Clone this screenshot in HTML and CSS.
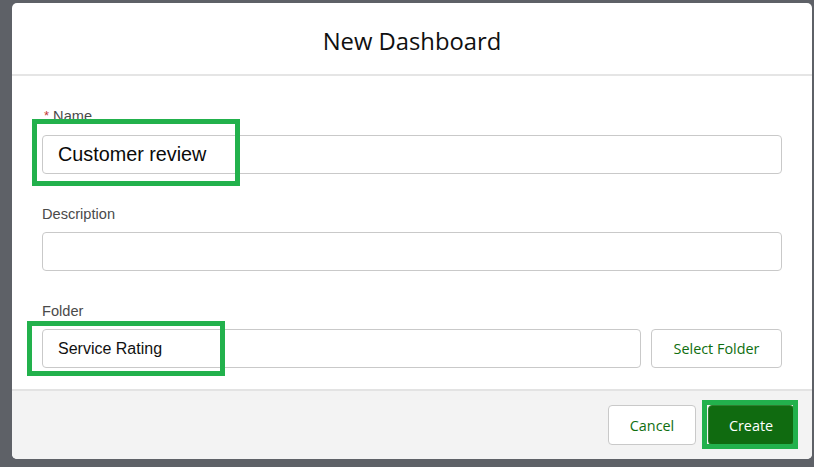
FILE: index.html
```html
<!DOCTYPE html>
<html lang="en">
<head>
<meta charset="utf-8">
<title>New Dashboard</title>
<link rel="stylesheet" href="styles.css">
</head>
<body>
<div class="modal">
  <header class="modal-header">
    <h2 class="modal-title">New Dashboard</h2>
  </header>
  <div class="modal-body">
    <div class="field">
      <label class="field-label"><abbr class="required">*</abbr> Name</label>
      <div class="input input-lg">Customer review</div>
    </div>
    <div class="field">
      <label class="field-label">Description</label>
      <div class="input"></div>
    </div>
    <div class="field">
      <label class="field-label">Folder</label>
      <div class="folder-row">
        <div class="input input-folder">Service Rating</div>
        <button class="btn btn-neutral btn-select">Select Folder</button>
      </div>
    </div>
  </div>
  <footer class="modal-footer">
    <button class="btn btn-neutral btn-cancel">Cancel</button>
    <button class="btn btn-brand">Create</button>
  </footer>
</div>
<div class="mark mark-name"></div>
<div class="mark mark-folder"></div>
<div class="mark mark-create"></div>
</body>
</html>
```

FILE: styles.css
```css
html, body {
  margin: 0;
  padding: 0;
}
body {
  background: #5e6167;
  width: 814px;
  height: 467px;
  overflow: hidden;
  position: relative;
  font-family: "Liberation Sans", Arial, sans-serif;
}
.modal {
  margin: 3px 0 0 12px;
  width: 800px;
  background: #ffffff;
  border-radius: 5px;
  overflow: hidden;
}
.modal-header {
  height: 71px;
  border-bottom: 2px solid #e5e5e5;
  display: flex;
  align-items: center;
  justify-content: center;
}
.modal-title {
  margin: 4px 0 0 0;
  font-family: "Open Sans", sans-serif;
  font-weight: 400;
  font-size: 23.8px;
  color: #101010;
}
.modal-body {
  padding: 30px 30px 21px 30px;
  display: flex;
  flex-direction: column;
  gap: 30px;
}
.field {
  display: flex;
  flex-direction: column;
}
.field-label {
  font-size: 14.6px;
  line-height: 20px;
  color: #4a4a4a;
  margin-bottom: 8px;
}
.required {
  color: #c23934;
  text-decoration: none;
  font-size: 13px;
  position: relative;
  top: -1px;
  margin-left: 2px;
}
.input {
  box-sizing: border-box;
  height: 39px;
  border: 1px solid #c9c9c9;
  border-radius: 4px;
  background: #fff;
  padding: 0 15px;
  display: flex;
  align-items: center;
  font-size: 16px;
  color: #111;
}
.input-lg {
  font-size: 19.8px;
  color: #0a0a0a;
}
.folder-row {
  display: flex;
  gap: 10px;
}
.input-folder {
  flex: 1;
}
.btn {
  box-sizing: border-box;
  font-family: "Open Sans", sans-serif;
  font-size: 14.4px;
  border-radius: 4px;
  height: 40px;
  cursor: pointer;
  padding: 0;
}
.btn-neutral {
  background: #ffffff;
  border: 1px solid #c9c9c9;
  color: #0f6e0f;
}
.btn-select {
  width: 131px;
  height: 39px;
}
.modal-footer {
  border-top: 2px solid #e3e3e3;
  background: #f3f3f3;
  padding: 14px 18px 14px 0;
  display: flex;
  justify-content: flex-end;
  gap: 12px;
}
.btn-cancel {
  width: 88px;
}
.btn-brand {
  width: 86px;
  background: #106b10;
  border: 1px solid #2f7f2f;
  color: #ffffff;
}
.mark {
  position: absolute;
  box-sizing: border-box;
  border: 5px solid #22b14c;
}
.mark-name {
  left: 32px;
  top: 119px;
  width: 208px;
  height: 67px;
}
.mark-folder {
  left: 27px;
  top: 321px;
  width: 198px;
  height: 55px;
}
.mark-create {
  left: 702px;
  top: 400px;
  width: 96px;
  height: 49px;
}
```
